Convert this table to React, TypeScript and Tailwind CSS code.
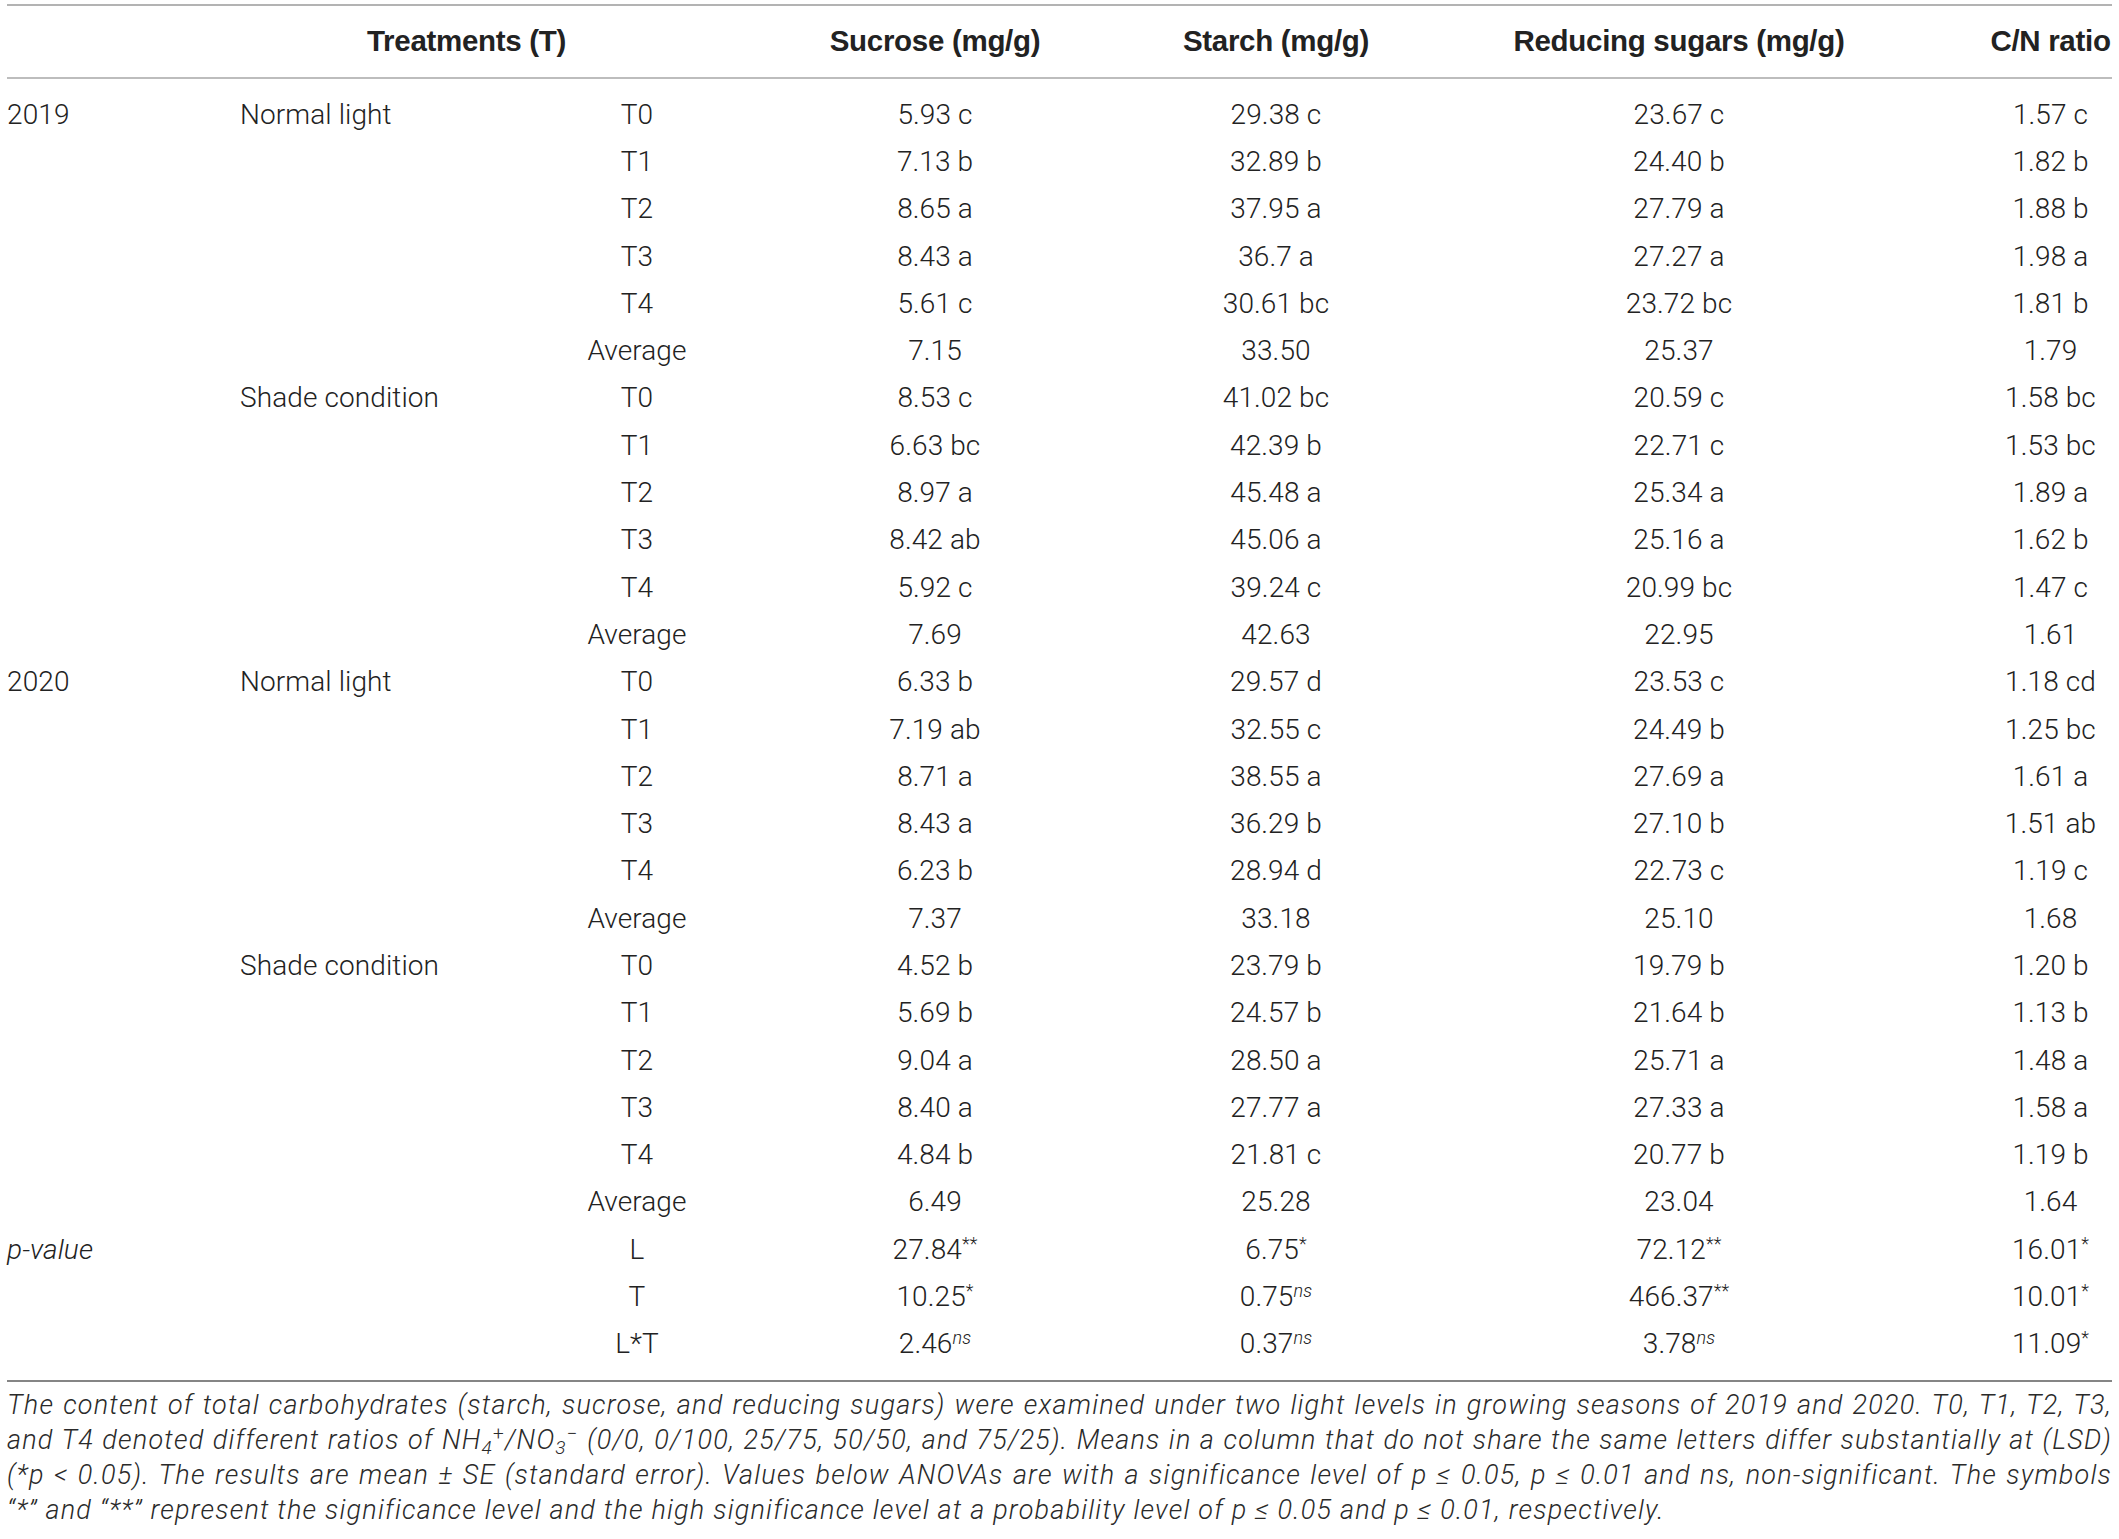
type Cell = { v: string; s?: string }

type Row = {
  year?: string
  light?: string
  label: string
  italicYear?: boolean
  cells: Cell[]
}

const c = (v: string, s?: string): Cell => ({ v, s })

function group(year: string | undefined, light: string, data: string[][]): Row[] {
  const labels = ['T0', 'T1', 'T2', 'T3', 'T4', 'Average']
  return data.map((values, i) => ({
    year: i === 0 ? year : undefined,
    light: i === 0 ? light : undefined,
    label: labels[i]!,
    cells: values.map(v => c(v)),
  }))
}

const ROWS: Row[] = [
  ...group('2019', 'Normal light', [
    ['5.93 c', '29.38 c', '23.67 c', '1.57 c'],
    ['7.13 b', '32.89 b', '24.40 b', '1.82 b'],
    ['8.65 a', '37.95 a', '27.79 a', '1.88 b'],
    ['8.43 a', '36.7 a', '27.27 a', '1.98 a'],
    ['5.61 c', '30.61 bc', '23.72 bc', '1.81 b'],
    ['7.15', '33.50', '25.37', '1.79'],
  ]),
  ...group(undefined, 'Shade condition', [
    ['8.53 c', '41.02 bc', '20.59 c', '1.58 bc'],
    ['6.63 bc', '42.39 b', '22.71 c', '1.53 bc'],
    ['8.97 a', '45.48 a', '25.34 a', '1.89 a'],
    ['8.42 ab', '45.06 a', '25.16 a', '1.62 b'],
    ['5.92 c', '39.24 c', '20.99 bc', '1.47 c'],
    ['7.69', '42.63', '22.95', '1.61'],
  ]),
  ...group('2020', 'Normal light', [
    ['6.33 b', '29.57 d', '23.53 c', '1.18 cd'],
    ['7.19 ab', '32.55 c', '24.49 b', '1.25 bc'],
    ['8.71 a', '38.55 a', '27.69 a', '1.61 a'],
    ['8.43 a', '36.29 b', '27.10 b', '1.51 ab'],
    ['6.23 b', '28.94 d', '22.73 c', '1.19 c'],
    ['7.37', '33.18', '25.10', '1.68'],
  ]),
  ...group(undefined, 'Shade condition', [
    ['4.52 b', '23.79 b', '19.79 b', '1.20 b'],
    ['5.69 b', '24.57 b', '21.64 b', '1.13 b'],
    ['9.04 a', '28.50 a', '25.71 a', '1.48 a'],
    ['8.40 a', '27.77 a', '27.33 a', '1.58 a'],
    ['4.84 b', '21.81 c', '20.77 b', '1.19 b'],
    ['6.49', '25.28', '23.04', '1.64'],
  ]),
  {
    year: 'p-value',
    italicYear: true,
    label: 'L',
    cells: [c('27.84', '**'), c('6.75', '*'), c('72.12', '**'), c('16.01', '*')],
  },
  { label: 'T', cells: [c('10.25', '*'), c('0.75', 'ns'), c('466.37', '**'), c('10.01', '*')] },
  { label: 'L*T', cells: [c('2.46', 'ns'), c('0.37', 'ns'), c('3.78', 'ns'), c('11.09', '*')] },
]

const GRID = 'grid grid-cols-[233px_300px_194px_402px_280px_526px_171px] items-center'

function Value({ cell }: { cell: Cell }) {
  return (
    <span className="whitespace-nowrap">
      {cell.v}
      {cell.s ? <sup className={`text-[18px] ${cell.s === 'ns' ? 'italic' : ''}`}>{cell.s}</sup> : null}
    </span>
  )
}

export default function App() {
  return (
    <div
      className="min-h-screen bg-white px-[7px] pt-[4px] text-[#222] antialiased"
      style={{ fontFamily: 'Roboto, "Liberation Sans", Arial, sans-serif' }}
    >
      <div className="h-[2px] bg-[#b3b3b3]" />
      <div
        className={`${GRID} h-[71px] text-[29.5px] font-bold tracking-[-0.3px]`}
        style={{ fontFamily: '"Liberation Sans", Arial, sans-serif' }}
      >
        <div />
        <div className="col-span-2 pl-[127px] whitespace-nowrap">Treatments (T)</div>
        <div className="text-center">Sucrose (mg/g)</div>
        <div className="text-center">Starch (mg/g)</div>
        <div className="whitespace-nowrap text-center">Reducing sugars (mg/g)</div>
        <div className="whitespace-nowrap pl-[46px] text-center">C/N ratio</div>
      </div>
      <div className="h-[2px] bg-[#bdbdbd]" />

      <div className="py-[12px] text-[28px] font-light tracking-[0.1px]">
        {ROWS.map((row, i) => (
          <div className={`${GRID} h-[47.3px]`} key={i}>
            <div className={row.italicYear ? 'italic' : ''}>{row.year}</div>
            <div>{row.light}</div>
            <div className="text-center">{row.label}</div>
            <div className="text-center">
              <Value cell={row.cells[0]!} />
            </div>
            <div className="text-center">
              <Value cell={row.cells[1]!} />
            </div>
            <div className="text-center">
              <Value cell={row.cells[2]!} />
            </div>
            <div className="pl-[46px] text-center">
              <Value cell={row.cells[3]!} />
            </div>
          </div>
        ))}
      </div>

      <div className="h-[2px] bg-[#858585]" />

      <div className="pt-[6px] text-[27px] font-light italic leading-[35px] tracking-[1.2px] text-[#2a2a2a]">
        <p className="text-justify [text-align-last:justify]">
          The content of total carbohydrates (starch, sucrose, and reducing sugars) were examined under two light
          levels in growing seasons of 2019 and 2020. T0, T1, T2, T3,
        </p>
        <p className="text-justify [text-align-last:justify]">
          and T4 denoted different ratios of NH<sub className="text-[19px]">4</sub>
          <sup className="text-[19px] not-italic">+</sup>/NO<sub className="text-[19px]">3</sub>
          <sup className="text-[19px] not-italic">−</sup> (0/0, 0/100, 25/75, 50/50, and 75/25). Means in a column
          that do not share the same letters differ substantially at (LSD)
        </p>
        <p className="text-justify [text-align-last:justify]">
          (*p &lt; 0.05). The results are mean ± SE (standard error). Values below ANOVAs are with a significance
          level of p ≤ 0.05, p ≤ 0.01 and ns, non-significant. The symbols
        </p>
        <p>
          “*” and “**” represent the significance level and the high significance level at a probability level of p ≤
          0.05 and p ≤ 0.01, respectively.
        </p>
      </div>
    </div>
  )
}
